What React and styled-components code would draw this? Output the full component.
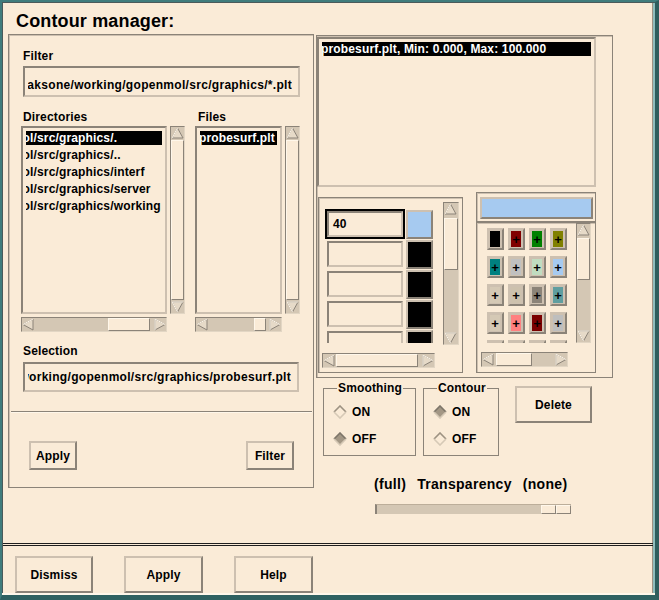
import React from "react";
import styled, { createGlobalStyle, css } from "styled-components";

const BG = "#faebd7";
const LIGHT = "#cdc0b0";
const DARK = "#8b8378";
const TROUGH = "#d4c7b4";
const SHINE = "#fff7ea";

const GlobalStyle = createGlobalStyle`
  * { box-sizing: border-box; }
  html, body { margin: 0; padding: 0; background: ${BG}; }
  body {
    font-family: "Liberation Sans", Arial, Helvetica, sans-serif;
    font-size: 12px;
    font-weight: bold;
    letter-spacing: 0.15px;
    color: #000;
  }
`;

const frame = css`
  border: 1px solid ${DARK};
  box-shadow: inset 1px 1px 0 ${LIGHT};
`;
const sunken = css`
  border: 2px solid;
  border-color: ${DARK} ${LIGHT} ${LIGHT} ${DARK};
`;
const raised = css`
  border: 2px solid;
  border-color: ${LIGHT} ${DARK} ${DARK} ${LIGHT};
`;

const Window = styled.div`
  width: 659px;
  height: 600px;
  display: flex;
  flex-direction: column;
  background: ${BG};
  border-style: solid;
  border-width: 2px 4px 5px 2px;
  border-color: #3f7c7c #2e5d5d #2f6161 #3f7c7c;
  box-shadow: inset 1px 1px 0 #4a5a5a, inset -2px 0 0 #8fbdbd, inset -3px 0 0 #9e9283;
  overflow: hidden;
`;

const Main = styled.div`
  height: 541px;
  flex-shrink: 0;
  padding: 9px 0 0 6px;
`;

const Title = styled.h1`
  margin: 0 0 3px 8px;
  font-size: 18px;
  line-height: 20px;
  font-weight: bold;
`;

const Body = styled.div`
  display: flex;
  align-items: flex-start;
`;

/* ---------- file selection box ---------- */

const FileBox = styled.div`
  ${frame};
  width: 306px;
  height: 454px;
  flex-shrink: 0;
  padding: 14px 12px 0 12px;
  display: flex;
  flex-direction: column;
`;

const FieldLabel = styled.div`
  height: 14px;
  line-height: 14px;
  margin: ${p => p.$top || 0}px 0 0 ${p => p.$left ?? 2}px;
`;

const EntryField = styled.div`
  ${sunken};
  width: ${p => p.$w}px;
  height: ${p => p.$h}px;
  margin: ${p => p.$top}px 0 0 2px;
  padding: ${p => p.$pad || 0}px 6px 0 3px;
  display: flex;
`;

const EntryClip = styled.div`
  flex: 1;
  overflow: hidden;
  display: flex;
  justify-content: flex-end;
  align-items: center;
  white-space: nowrap;
  line-height: 14px;
  letter-spacing: 0.3px;

  span { flex-shrink: 0; }
`;

const ListsRow = styled.div`
  display: flex;
  margin-top: 13px;
`;

const ListColumn = styled.div`
  display: flex;
  flex-direction: column;
  margin-left: ${p => p.$gap || 0}px;
`;

const ListPair = styled.div`
  display: flex;
  gap: 3px;
  margin-top: 2px;
`;

const Listbox = styled.div`
  ${sunken};
  width: ${p => p.$w}px;
  height: ${p => p.$h}px;
  padding: 3px;
`;

const ListViewport = styled.div`
  height: 100%;
  overflow: hidden;
`;

const ListItem = styled.div`
  height: 14px;
  line-height: 14px;
  margin-bottom: 3px;
  white-space: nowrap;
  background: ${p => (p.$selected ? "#000" : "transparent")};
  color: ${p => (p.$selected ? "#fff" : "#000")};
`;

const ItemText = styled.span`
  display: block;
  margin-left: ${p => p.$shift}px;
`;

const HScrollSlot = styled.div`
  margin-top: 3px;
`;

const Separator = styled.div`
  height: 2px;
  margin: 19px -11px 0 -10px;
  border-top: 1px solid ${DARK};
  border-bottom: 1px solid ${SHINE};
`;

const ButtonRow = styled.div`
  display: flex;
  justify-content: space-between;
  margin-top: 28px;
  padding: 0 7px 0 8px;
`;

const Button = styled.button`
  ${raised};
  width: ${p => p.$w}px;
  height: ${p => p.$h}px;
  flex-shrink: 0;
  padding: 0;
  background: ${BG};
  font: inherit;
  letter-spacing: inherit;
  color: #000;
  margin: ${p => p.$margin || 0};
`;

/* ---------- scrollbars ---------- */

const Track = styled.div`
  display: flex;
  flex-direction: ${p => (p.$v ? "column" : "row")};
  width: ${p => (p.$v ? p.$thick : p.$len)}px;
  height: ${p => (p.$v ? p.$len : p.$thick)}px;
  flex-shrink: 0;
  background: ${TROUGH};
  border: 1px solid;
  border-color: ${DARK} #e2d6c4 #e2d6c4 ${DARK};

  svg { flex-shrink: 0; display: block; }
`;

const Lane = styled.div`
  flex: 1;
  display: flex;
  flex-direction: ${p => (p.$v ? "column" : "row")};
  padding: ${p => (p.$v ? "1px 0" : "0 1px")};
  min-width: 0;
  min-height: 0;
`;

const Thumb = styled.div`
  flex: ${p => p.$grow} 1 0;
  background: ${BG};
  border: 1px solid;
  border-color: ${SHINE} ${DARK} ${DARK} ${SHINE};
`;

const Space = styled.div`
  flex: ${p => p.$grow} 1 0;
`;

const arrowShapes = {
  up: { box: [13, 12], pts: "6.5,1 1,11 12,11", lit: "1,11 6.5,1" },
  down: { box: [13, 12], pts: "6.5,11 1,1 12,1", lit: "6.5,11 1,1 12,1" },
  left: { box: [12, 13], pts: "1,6.5 11,1 11,12", lit: "1,6.5 11,1" },
  right: { box: [12, 13], pts: "11,6.5 1,1 1,12", lit: "1,12 1,1 11,6.5" },
};

function Arrow({ dir }) {
  const a = arrowShapes[dir];
  return (
    <svg width={a.box[0]} height={a.box[1]} viewBox={`0 0 ${a.box[0]} ${a.box[1]}`}>
      <polygon points={a.pts} fill="#e6dac8" stroke={DARK} strokeWidth="1" />
      <polyline points={a.lit} fill="none" stroke={SHINE} strokeWidth="1" />
    </svg>
  );
}

function Scrollbar({ vertical, length, thick = 15, before = 0, size = 1, after = 0 }) {
  return (
    <Track $v={vertical} $len={length} $thick={thick}>
      <Arrow dir={vertical ? "up" : "left"} />
      <Lane $v={vertical}>
        <Space $grow={before} />
        <Thumb $grow={size} />
        <Space $grow={after} />
      </Lane>
      <Arrow dir={vertical ? "down" : "right"} />
    </Track>
  );
}

/* ---------- right column ---------- */

const RightCol = styled.div`
  display: flex;
  flex-direction: column;
  margin: 1px 0 0 2px;
  width: 297px;
`;

const UpperFrame = styled.div`
  ${frame};
  width: 297px;
  height: 343px;
  padding-top: 1px;
`;

const LowerRow = styled.div`
  display: flex;
  align-items: flex-end;
  margin-top: 5px;
`;

const LevelsFrame = styled.div`
  ${frame};
  width: 145px;
  height: 176px;
  margin-left: 1px;
  padding: 4px 0 0 3px;
  display: grid;
  grid-template-columns: 115px 16px;
  grid-template-rows: 143px 15px;
  column-gap: 6px;
  row-gap: 8px;
  align-items: start;
`;

const LevelsViewport = styled.div`
  height: 141px;
  overflow: hidden;
  padding: 7px 0 0 3px;
  display: flex;
  flex-direction: column;
`;

const LevelRow = styled.div`
  display: flex;
  align-items: flex-end;
  gap: 1px;
  height: 30px;
  flex-shrink: 0;
`;

const LevelCell = styled.div`
  width: 80px;
  height: 30px;
  border: 2px solid ${p => (p.$focused ? "#000" : "transparent")};
  display: flex;
`;

const LevelEntry = styled.div`
  ${sunken};
  flex: 1;
  display: flex;
  align-items: center;
  padding-left: 4px;
`;

const Swatch = styled.div`
  ${raised};
  width: 27px;
  height: 29px;
  background: ${p => p.$color};
`;

const PaletteFrame = styled.div`
  width: 120px;
  margin-left: 13px;
  display: flex;
  flex-direction: column;
`;

const CurrentBox = styled.div`
  ${frame};
  height: 30px;
  padding: 4px 0 0 3px;
`;

const CurrentSwatch = styled.div`
  ${raised};
  width: 113px;
  height: 22px;
  background: #a6caf0;
`;

const PaletteBody = styled.div`
  ${frame};
  height: 151px;
  padding: 0 0 0 4px;
  display: grid;
  grid-template-columns: 89px 15px;
  grid-template-rows: 120px 15px;
  column-gap: 6px;
  row-gap: 9px;
`;

const ColorViewport = styled.div`
  overflow: hidden;
  padding: 5px 0 0 6px;
`;

const ColorGrid = styled.div`
  display: grid;
  grid-template-columns: repeat(4, 17px);
  grid-auto-rows: 22px;
  column-gap: 4px;
  row-gap: 6px;
`;

const ColorButton = styled.div`
  ${raised};
  padding: 1px 2px 1px 1px;
  background: ${LIGHT};
  display: flex;
`;

const ColorFill = styled.div`
  flex: 1;
  background: ${p => p.$color};
  display: flex;
  align-items: center;
  justify-content: center;
  font-size: 13px;
  line-height: 1;
`;

const OptionsRow = styled.div`
  display: flex;
  align-items: flex-start;
  margin-top: 3px;
`;

const GroupBox = styled.fieldset`
  margin: 0 0 0 7px;
  width: ${p => p.$w}px;
  min-width: 0;
  padding: 7px 0 6px 9px;
  border: 1px solid ${DARK};
`;

const GroupTitle = styled.legend`
  margin-left: 4px;
  padding: 0 1px;
  line-height: 14px;
  font-size: 12px;
`;

const RadioRow = styled.div`
  display: flex;
  align-items: center;
  gap: 5px;
  height: 20px;

  & + & { margin-top: 7px; }
  svg { display: block; }
`;

const TransLabel = styled.div`
  display: flex;
  gap: 11px;
  margin: 20px 0 0 58px;
  font-size: 14px;
  line-height: 16px;
  letter-spacing: 0.3px;
  white-space: nowrap;
`;

const Slider = styled.div`
  width: 196px;
  height: 10px;
  margin: 12px 0 0 59px;
  background: ${TROUGH};
  border-left: 2px solid ${DARK};
  border-top: 1px solid #bcae9a;
  display: flex;
  justify-content: flex-end;
`;

const SliderThumb = styled.div`
  width: 30px;
  display: flex;
`;

const ThumbHalf = styled.div`
  flex: 1;
  background: ${BG};
  border: 1px solid;
  border-color: ${SHINE} ${DARK} ${DARK} ${SHINE};
`;

/* ---------- bottom ---------- */

const DoubleRule = styled.div`
  height: 3px;
  flex-shrink: 0;
  margin: 0 2px 0 1px;
  border-top: 1px solid #1e1e1e;
  border-bottom: 1px solid #1e1e1e;
`;

const ButtonBar = styled.div`
  height: 49px;
  flex-shrink: 0;
  display: flex;
  align-items: flex-start;
  gap: 31px;
  padding: 10px 0 0 13px;
  box-shadow: inset 0 -2px 0 ${SHINE};
`;

function Diamond({ on }) {
  return (
    <svg width="14" height="14" viewBox="0 0 14 14">
      <polygon points="7,1 13,7 7,13 1,7" fill={on ? "#a39785" : "none"} />
      <polyline points="1,7 7,1 13,7" fill="none" stroke={on ? "#7d7569" : "#9d9282"} strokeWidth="1.6" />
      <polyline points="1,7 7,13 13,7" fill="none" stroke="#d6c9b6" strokeWidth="1.6" />
    </svg>
  );
}

function Entry({ text, w, h, top, pad }) {
  return (
    <EntryField $w={w} $h={h} $top={top} $pad={pad}>
      <EntryClip>
        <span>{text}</span>
      </EntryClip>
    </EntryField>
  );
}

const dirItems = [
  "gopenmol/src/graphics/.",
  "gopenmol/src/graphics/..",
  "gopenmol/src/graphics/interf",
  "gopenmol/src/graphics/server",
  "gopenmol/src/graphics/working",
];

const levels = [
  { value: "40", color: "#a6caf0", focused: true },
  { value: "", color: "#000" },
  { value: "", color: "#000" },
  { value: "", color: "#000" },
  { value: "", color: "#000" },
];

const palette = [
  "#000000", "#800000", "#008000", "#808000",
  "#008080", "#c0c0c0", "#c0dcc0", "#a6caf0",
  "#d5c9b5", "#cdc1ad", "#8b8378", "#5f9ea0",
  "#d5c9b5", "#ff8080", "#7a0000", "#bebebe",
  "#000080", "#800080", "#ffff00", "#00ffff",
];

export default function App() {
  return (
    <>
      <GlobalStyle />
      <Window>
        <Main>
          <Title>Contour manager:</Title>
          <Body>
            <FileBox>
              <FieldLabel>Filter</FieldLabel>
              <Entry text="/home/laaksone/working/gopenmol/src/graphics/*.plt" w={277} h={31} top={3} pad={6} />

              <ListsRow>
                <ListColumn>
                  <FieldLabel>Directories</FieldLabel>
                  <ListPair>
                    <Listbox $w={146} $h={188}>
                      <ListViewport>
                        {dirItems.map((d, i) => (
                          <ListItem key={d} $selected={i === 0}>
                            <ItemText $shift={-51}>{d}</ItemText>
                          </ListItem>
                        ))}
                      </ListViewport>
                    </Listbox>
                    <Scrollbar vertical length={188} />
                  </ListPair>
                  <HScrollSlot>
                    <Scrollbar length={146} before={0.63} size={0.34} after={0.03} />
                  </HScrollSlot>
                </ListColumn>
                <ListColumn $gap={10}>
                  <FieldLabel $left={3}>Files</FieldLabel>
                  <ListPair>
                    <Listbox $w={87} $h={188}>
                      <ListViewport>
                        <ListItem $selected>
                          <ItemText $shift={-1}>probesurf.plt</ItemText>
                        </ListItem>
                      </ListViewport>
                    </Listbox>
                    <Scrollbar vertical length={188} />
                  </ListPair>
                  <HScrollSlot>
                    <Scrollbar length={87} before={0.79} size={0.17} after={0.04} />
                  </HScrollSlot>
                </ListColumn>
              </ListsRow>

              <FieldLabel $top={12}>Selection</FieldLabel>
              <Entry text="/home/laaksone/working/gopenmol/src/graphics/probesurf.plt" w={276} h={30} top={4} />

              <Separator />
              <ButtonRow>
                <Button $w={48} $h={29}>Apply</Button>
                <Button $w={48} $h={29}>Filter</Button>
              </ButtonRow>
            </FileBox>

            <RightCol>
              <UpperFrame>
                <Listbox $w={279} $h={150}>
                  <ListViewport>
                    <ListItem $selected>
                      <ItemText $shift={-1}>probesurf.plt, Min: 0.000, Max: 100.000</ItemText>
                    </ListItem>
                  </ListViewport>
                </Listbox>
                <LowerRow>
                  <LevelsFrame>
                    <LevelsViewport>
                      {levels.map((l, i) => (
                        <LevelRow key={i}>
                          <LevelCell $focused={l.focused}>
                            <LevelEntry>{l.value}</LevelEntry>
                          </LevelCell>
                          <Swatch $color={l.color} />
                        </LevelRow>
                      ))}
                    </LevelsViewport>
                    <Scrollbar vertical length={143} thick={16} before={0.02} size={0.44} after={0.54} />
                    <Scrollbar length={113} before={0} size={0.96} after={0.04} />
                  </LevelsFrame>
                  <PaletteFrame>
                    <CurrentBox>
                      <CurrentSwatch />
                    </CurrentBox>
                    <PaletteBody>
                      <ColorViewport>
                        <ColorGrid>
                          {palette.map((c, i) => (
                            <ColorButton key={i}>
                              <ColorFill $color={c}>+</ColorFill>
                            </ColorButton>
                          ))}
                        </ColorGrid>
                      </ColorViewport>
                      <Scrollbar vertical length={120} before={0.01} size={0.44} after={0.55} />
                      <Scrollbar length={87} before={0.02} size={0.6} after={0.38} />
                    </PaletteBody>
                  </PaletteFrame>
                </LowerRow>
              </UpperFrame>

              <OptionsRow>
                <GroupBox $w={93}>
                  <GroupTitle>Smoothing</GroupTitle>
                  <RadioRow><Diamond />ON</RadioRow>
                  <RadioRow><Diamond on />OFF</RadioRow>
                </GroupBox>
                <GroupBox $w={76}>
                  <GroupTitle>Contour</GroupTitle>
                  <RadioRow><Diamond on />ON</RadioRow>
                  <RadioRow><Diamond />OFF</RadioRow>
                </GroupBox>
                <Button $w={77} $h={37} $margin="5px 0 0 16px">Delete</Button>
              </OptionsRow>

              <TransLabel>
                <span>(full)</span>
                <span>Transparency</span>
                <span>(none)</span>
              </TransLabel>
              <Slider>
                <SliderThumb>
                  <ThumbHalf />
                  <ThumbHalf />
                </SliderThumb>
              </Slider>
            </RightCol>
          </Body>
        </Main>
        <DoubleRule />
        <ButtonBar>
          <Button $w={78} $h={37}>Dismiss</Button>
          <Button $w={79} $h={37}>Apply</Button>
          <Button $w={79} $h={37}>Help</Button>
        </ButtonBar>
      </Window>
    </>
  );
}
